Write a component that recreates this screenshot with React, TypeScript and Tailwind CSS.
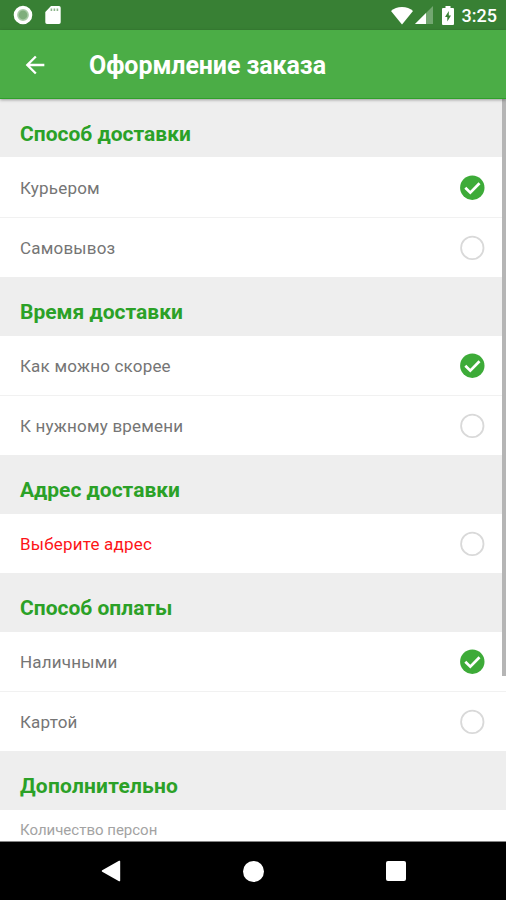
import React from 'react';
import clsx from 'clsx';

interface Option {
  label: string;
  checked?: boolean;
  error?: boolean;
}

interface Section {
  title: string;
  options: Option[];
}

const SECTIONS: Section[] = [
  { title: 'Способ доставки', options: [{ label: 'Курьером', checked: true }, { label: 'Самовывоз' }] },
  { title: 'Время доставки', options: [{ label: 'Как можно скорее', checked: true }, { label: 'К нужному времени' }] },
  { title: 'Адрес доставки', options: [{ label: 'Выберите адрес', error: true }] },
  { title: 'Способ оплаты', options: [{ label: 'Наличными', checked: true }, { label: 'Картой' }] },
];

const StatusBar = () => (
  <div className="flex h-[30px] shrink-0 items-center justify-between bg-[#388034] pl-[13px] pr-[9px] text-white">
    <div className="flex items-center gap-[12px]">
      <svg width="20" height="20" viewBox="0 0 20 20">
        <circle cx="10" cy="10" r="7.6" fill="#a9cba7" stroke="white" strokeWidth="3.4" />
        <circle cx="10" cy="10" r="4.4" fill="#7fae7c" />
      </svg>
      <svg width="16" height="20" viewBox="0 0 16 20" fill="white">
        <path d="M6 1h8a1.7 1.7 0 0 1 1.7 1.7v14.6A1.7 1.7 0 0 1 14 19H2a1.7 1.7 0 0 1-1.7-1.7V7z" />
        <path d="M5.6 3.5h1.6v2.500H5.6zM8.6 3.5h1.6v2.500H8.6zM11.6 3.5h1.6v2.500h-1.6z" fill="#8db58b" />
      </svg>
    </div>
    <div className="flex items-center">
      <svg width="24" height="19" viewBox="0 0 24 19" fill="white">
        <path d="M12 18.5 1 5C4 2.300 7.500 1 12 1s8 1.300 11 4z" />
      </svg>
      <svg className="ml-[1px]" width="18" height="18" viewBox="0 0 18 18">
        <path d="M18 0v18H0z" fill="#73a771" />
        <path d="M11 7v11H0z" fill="white" />
      </svg>
      <svg className="ml-[9px]" width="12" height="19" viewBox="0 0 12 19">
        <path d="M3.500 0h5v2H11a1 1 0 0 1 1 1v15a1 1 0 0 1-1 1H1a1 1 0 0 1-1-1V3a1 1 0 0 1 1-1h2.500z" fill="white" />
        <path d="M6.800 5v4.500h2.200L5.300 15.500V11H3z" fill="#388034" />
      </svg>
      <span className="ml-[8px] mt-[2px] text-[18px] font-medium leading-none">3:25</span>
    </div>
  </div>
);

const AppBar = () => (
  <header className="relative z-10 flex h-[69px] shrink-0 items-center border-b border-[#2fa02a] bg-[#4bad46] pl-[21px] text-white shadow-[0_1px_3px_rgba(0,0,0,0.35)]">
    <svg className="mt-px" width="28" height="28" viewBox="0 0 24 24" fill="white">
      <path d="M20 11H7.830l5.590-5.590L12 4l-8 8 8 8 1.410-1.410L7.830 13H20v-2z" />
    </svg>
    <h1 className="ml-[40px] mt-[2px] text-[25px] font-bold leading-none tracking-[-0.08px]">Оформление заказа</h1>
  </header>
);

const Radio = ({ checked }: { checked?: boolean }) =>
  checked ? (
    <svg width="25" height="25" viewBox="0 0 25 25">
      <circle cx="12.300" cy="12.700" r="12.200" fill="#3dab38" />
      <path d="M5.300 12.700l5 5L19.500 8.200" fill="none" stroke="white" strokeWidth="2.700" />
    </svg>
  ) : (
    <svg width="25" height="25" viewBox="0 0 25 25">
      <circle cx="12.300" cy="12.900" r="11.200" fill="none" stroke="#d9d9d9" strokeWidth="1.800" />
    </svg>
  );

const SectionTitle = ({ className, children }: { className?: string; children: React.ReactNode }) => (
  <h2
    className={clsx(
      'flex h-[59px] shrink-0 items-center bg-[#eeeeee] pl-[20px] text-[21px] font-bold leading-none text-[#2ba127]',
      className ?? 'pt-[11px]'
    )}
  >
    {children}
  </h2>
);

const App = () => (
  <div
    className="relative flex h-[900px] w-[506px] flex-col overflow-hidden bg-white"
    style={{ fontFamily: 'Roboto, "Noto Sans", sans-serif' }}
  >
    <StatusBar />
    <AppBar />
    <main className="-mt-px flex min-h-0 flex-1 flex-col overflow-hidden">
      {SECTIONS.map((section, index) => (
        <section key={section.title} className="shrink-0">
          <SectionTitle className={index === 0 ? 'pt-[13px]' : undefined}>{section.title}</SectionTitle>
          <div className={clsx('divide-y divide-[#f1f1f1]', index === 0 && 'pt-px')}>
            {section.options.map((option) => (
              <div key={option.label} className="box-content flex h-[59px] items-center justify-between pl-[20px] pr-[21px]">
                <span
                  className={clsx(
                    'mt-[2px] text-[17px] leading-none tracking-[0.2px]',
                    option.error ? 'text-[#fd1418]' : 'text-[#757575]'
                  )}
                >
                  {option.label}
                </span>
                <Radio checked={option.checked} />
              </div>
            ))}
          </div>
        </section>
      ))}
      <SectionTitle className="pt-[11px] tracking-[0.2px]">Дополнительно</SectionTitle>
      <div className="shrink-0 pl-[20px] pt-[13px] text-[15px] leading-none text-[#a3a3a3]">
        Количество персон
      </div>
    </main>

    {/* Scroll indicator over the list */}
    <div className="absolute right-0 top-[99px] h-[577px] w-[4px] bg-[#b5b5b5]" />

    <nav className="flex h-[59px] shrink-0 items-center border-t border-[#858585] bg-black pl-[101px]">
      <svg width="20" height="22" viewBox="0 0 20 22" fill="white">
        <path d="M18 .800a.800.800 0 0 1 1.200.700v19a.800.800 0 0 1-1.200.700L1.200 11.700a.800.800 0 0 1 0-1.400z" />
      </svg>
      <span className="ml-[122px] size-[21px] rounded-full bg-white" />
      <span className="ml-[122px] size-[20px] rounded-[2px] bg-white" />
    </nav>
  </div>
);

export default App;
